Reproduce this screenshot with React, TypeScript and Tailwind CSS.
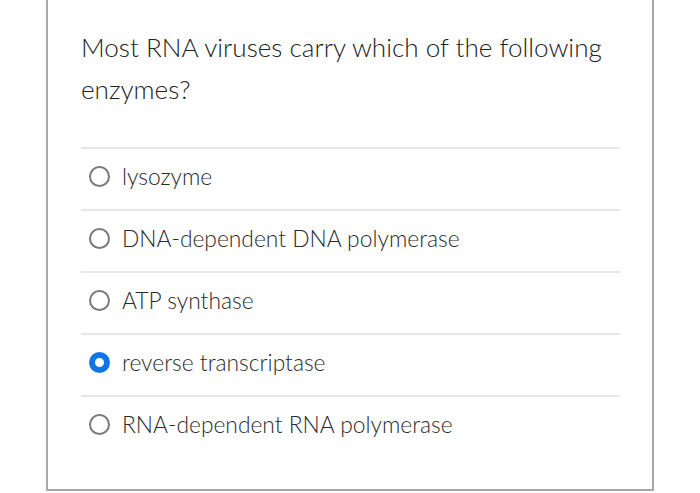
import React from 'react';

const OPTIONS = [
  { id: 'a', label: 'lysozyme' },
  { id: 'b', label: 'DNA-dependent DNA polymerase' },
  { id: 'c', label: 'ATP synthase' },
  { id: 'd', label: 'reverse transcriptase' },
  { id: 'e', label: 'RNA-dependent RNA polymerase' },
];

export default function App() {
  const selected = 'd';

  return (
    <div className="w-[700px] h-[493px] bg-white" style={{ fontFamily: 'Lato, "Open Sans", sans-serif' }}>
      <div className="ml-[46px] w-[608px] h-[491px] border-x-2 border-b-2 border-[#a8a8a8] pl-[33px] pr-[32px] pt-[26px]">
        <p className="text-[26.1px] leading-[42px] font-light text-[#222]">
          Most RNA viruses carry which of the following enzymes?
        </p>

        <ul className="mt-[37px]">
          {OPTIONS.map(opt => {
            const isOn = opt.id === selected;
            return (
              <li key={opt.id} className="border-t-2 border-[#e6e6e6] h-[62px] flex items-center pb-[5px]">
                {isOn ? (
                  <span className="w-[21px] h-[21px] ml-[8px] rounded-full border-[6.5px] border-[#1076e8] bg-white" />
                ) : (
                  <span className="w-[21px] h-[21px] ml-[8px] rounded-full border-2 border-[#7a7a7a]" />
                )}
                <span className="ml-[12px] text-[22.8px] font-light text-[#2a2a2a]">{opt.label}</span>
              </li>
            );
          })}
        </ul>
      </div>
    </div>
  );
}
